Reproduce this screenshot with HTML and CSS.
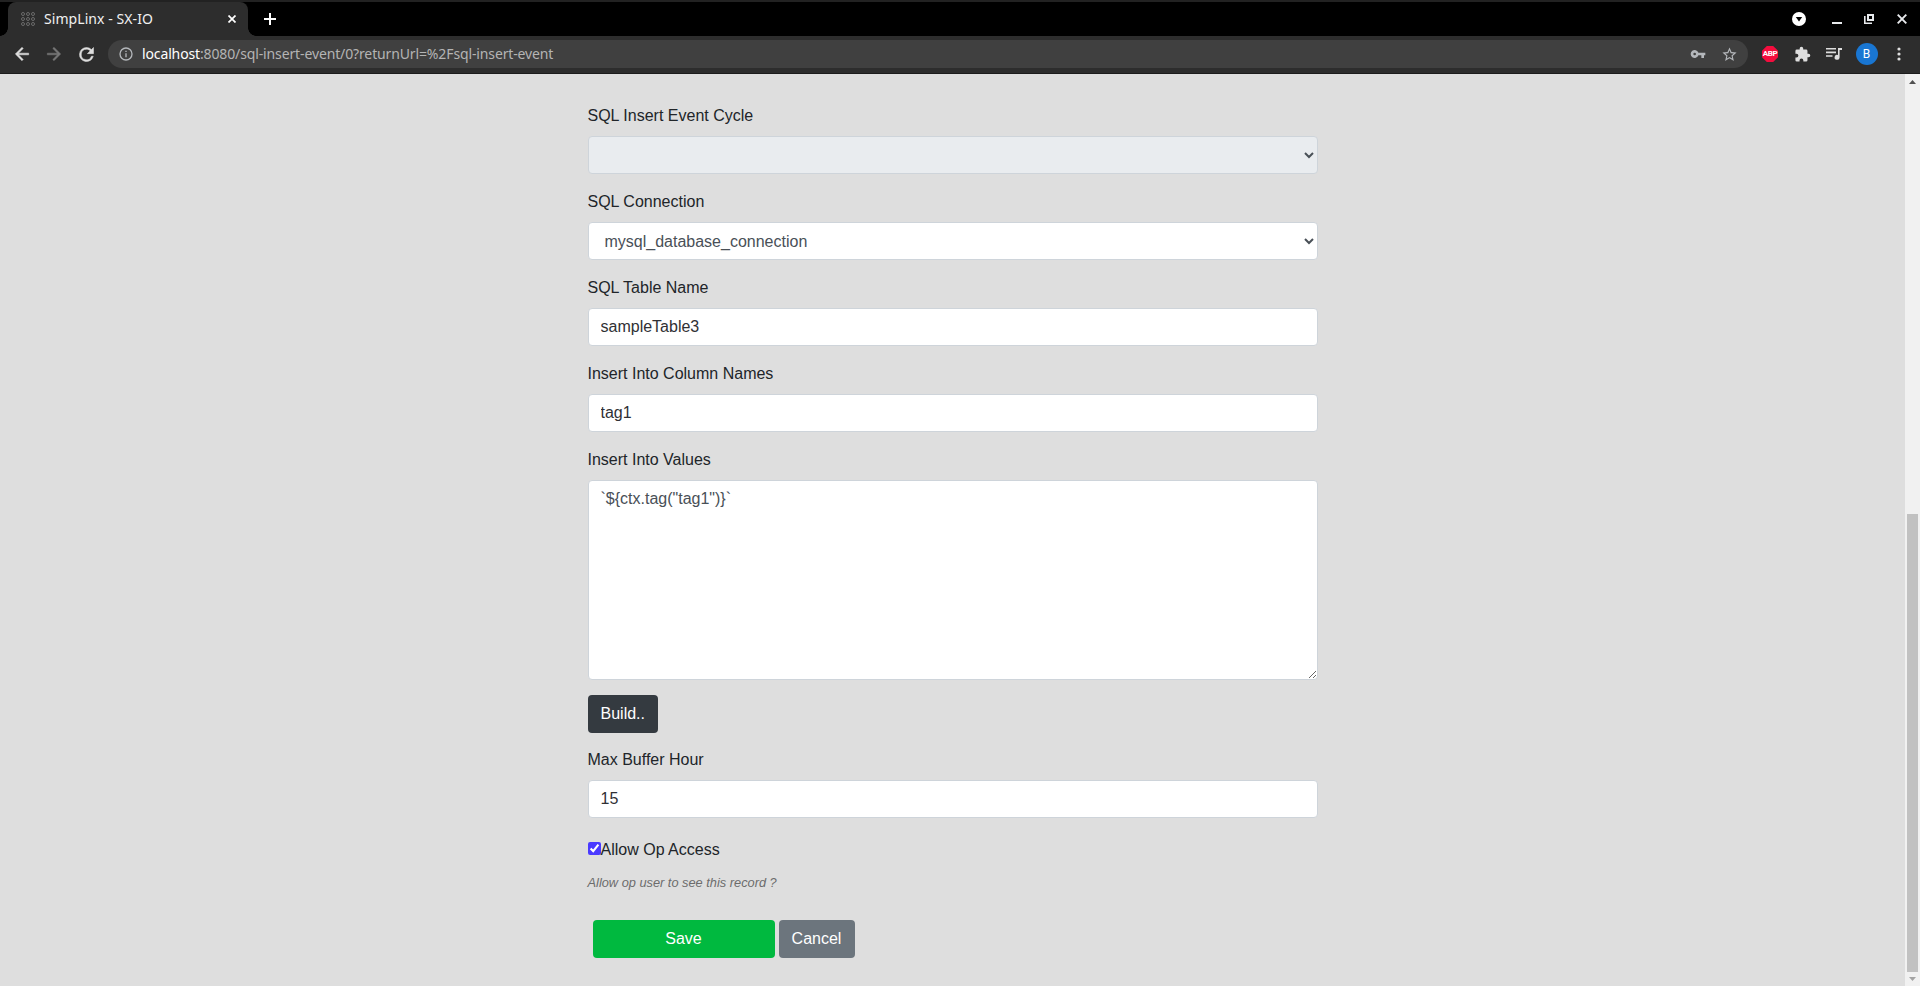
FILE: index.html
```html
<!DOCTYPE html>
<html lang="en">
<head>
    <meta charset="UTF-8">
    <meta name="viewport" content="width=device-width, initial-scale=1.0">
    <title>SimpLinx - SX-IO</title>
    <link rel="stylesheet" href="styles.css">
</head>
<body>
    <div class="tabstrip">
        <div class="tab">
            <svg class="favicon" width="14" height="14" viewBox="0 0 14 14" fill="none" stroke="#6b6b6b">
                <circle cx="2" cy="2" r="1.5"/><circle cx="7" cy="2" r="1.5"/><circle cx="12" cy="2" r="1.5"/>
                <circle cx="2" cy="7" r="1.5"/><circle cx="7" cy="7" r="1.5"/><circle cx="12" cy="7" r="1.5"/>
                <circle cx="2" cy="12" r="1.5"/><circle cx="7" cy="12" r="1.5"/><circle cx="12" cy="12" r="1.5"/>
            </svg>
            <span class="tab-title">SimpLinx - SX-IO</span>
            <svg class="tab-close" width="8" height="8" viewBox="0 0 8 8" stroke="#fff" stroke-width="1.7"><path d="M.5.5l7 7M7.5.5l-7 7"/></svg>
        </div>
        <svg class="new-tab" width="12" height="12" viewBox="0 0 12 12" stroke="#fff" stroke-width="2"><path d="M6 0v12M0 6h12"/></svg>
        <div class="window-buttons">
            <svg width="14" height="14" viewBox="0 0 14 14"><circle cx="7" cy="7" r="7" fill="#fff"/><path d="M3.8 5h6.4L7 9.6z" fill="#000"/></svg>
            <svg width="10" height="10" viewBox="0 0 10 10"><path d="M0 8h10v2H0z" fill="#e8eaed"/></svg>
            <svg width="10" height="10" viewBox="0 0 10 10" fill="none" stroke="#e8eaed"><path d="M4 1h5v5H4z" stroke-width="2"/><path d="M.8 2v7.2H8" stroke-width="1.6"/></svg>
            <svg width="10" height="10" viewBox="0 0 10 10" stroke="#e8eaed" stroke-width="1.9"><path d="M.7.7l8.6 8.6M9.3.7L.7 9.3"/></svg>
        </div>
    </div>

    <div class="toolbar">
        <svg class="nav-icon" width="20" height="20" viewBox="0 0 24 24" fill="#dedede" stroke="#dedede" stroke-width=".6"><path d="M20 11H7.83l5.59-5.59L12 4l-8 8 8 8 1.41-1.41L7.83 13H20z"/></svg>
        <svg class="nav-icon" width="20" height="20" viewBox="0 0 24 24" fill="#777" stroke="#777" stroke-width=".6"><path d="M12 4l-1.410 1.410L16.170 11H4v2h12.170l-5.580 5.590L12 20l8-8z"/></svg>
        <svg class="nav-icon" width="21" height="21" viewBox="0 0 24 24" fill="#dedede" stroke="#dedede" stroke-width=".6"><path d="M17.65 6.35A7.96 7.96 0 0 0 12 4a8 8 0 1 0 7.73 10h-2.08A6 6 0 1 1 12 6c1.66 0 3.14.69 4.22 1.78L13 11h7V4z"/></svg>
        <div class="address">
            <svg width="16" height="16" viewBox="0 0 24 24" fill="#b4b7bb"><path d="M11 7h2v2h-2zm0 4h2v6h-2zm1-9a10 10 0 1 0 0 20 10 10 0 0 0 0-20zm0 18a8 8 0 1 1 0-16 8 8 0 0 1 0 16z"/></svg>
            <span class="url"><b>localhost</b>:8080/sql-insert-event/0?returnUrl=%2Fsql-insert-event</span>
            <svg class="key" width="16" height="16" viewBox="0 0 24 24" fill="#b4b7bb"><path d="M12.65 10A6 6 0 1 0 12.65 14H17v4h4v-4h2v-4zM7 14a2 2 0 1 1 0-4 2 2 0 0 1 0 4z"/></svg>
            <svg width="17" height="17" viewBox="0 0 24 24" fill="#b4b7bb"><path d="M22 9.24l-7.19-.62L12 2 9.19 8.63 2 9.24l5.46 4.73L5.82 21 12 17.27 18.18 21l-1.63-7.03zM12 15.4l-3.76 2.27 1-4.28-3.32-2.88 4.38-.38L12 6.1l1.71 4.04 4.38.38-3.32 2.88 1 4.28z"/></svg>
        </div>
        <div class="extensions">
            <span class="abp">ABP</span>
            <svg width="17" height="17" viewBox="0 0 24 24" fill="#dedede"><path d="M20.5 11H19V7a2 2 0 0 0-2-2h-4V3.500a2.500 2.500 0 0 0-5 0V5H4a2 2 0 0 0-2 2v3.800h1.500a2.700 2.700 0 0 1 0 5.400H2V20a2 2 0 0 0 2 2h3.800v-1.500a2.700 2.700 0 0 1 5.400 0V22H17a2 2 0 0 0 2-2v-4h1.500a2.500 2.500 0 0 0 0-5z"/></svg>
            <svg width="16" height="14" viewBox="0 0 16 14" fill="#dedede"><path d="M0 1h10v1.600H0zM0 4.600h10v1.600H0zM0 8.200h6.500v1.600H0zM12 1h4v2h-2.400v7.300a2.500 2.500 0 1 1-1.600-2.300z"/></svg>
            <span class="avatar">B</span>
            <svg width="4" height="14" viewBox="0 0 4 14" fill="#dedede"><circle cx="2" cy="2" r="1.600"/><circle cx="2" cy="7" r="1.600"/><circle cx="2" cy="12" r="1.600"/></svg>
        </div>
    </div>

    <div class="viewport">
        <form class="event-form">
            <div class="form-group">
                <label for="cycle">SQL Insert Event Cycle</label>
                <select class="form-control" id="cycle" disabled></select>
            </div>
            <div class="form-group">
                <label for="connection">SQL Connection</label>
                <select class="form-control" id="connection">
                    <option>mysql_database_connection</option>
                </select>
            </div>
            <div class="form-group">
                <label for="table">SQL Table Name</label>
                <input class="form-control" type="text" id="table" value="sampleTable3">
            </div>
            <div class="form-group">
                <label for="columns">Insert Into Column Names</label>
                <input class="form-control" type="text" id="columns" value="tag1">
            </div>
            <div class="form-group values">
                <label for="values">Insert Into Values</label>
                <textarea class="form-control" id="values">`${ctx.tag("tag1")}`</textarea>
            </div>
            <button class="btn btn-dark" type="button">Build..</button>
            <div class="form-group">
                <label for="buffer">Max Buffer Hour</label>
                <input class="form-control" type="text" id="buffer" value="15">
            </div>
            <div class="check">
                <input type="checkbox" id="access" checked><label for="access">Allow Op Access</label>
            </div>
            <p class="hint">Allow op user to see this record ?</p>
            <div class="actions">
                <button class="btn btn-save" type="button">Save</button>
                <button class="btn btn-cancel" type="button">Cancel</button>
            </div>
        </form>
        <div class="scrollbar">
            <svg width="7" height="4" viewBox="0 0 7 4"><path d="M0 4L3.500 0 7 4z" fill="#505050"/></svg>
            <div class="thumb"></div>
            <svg width="7" height="4" viewBox="0 0 7 4"><path d="M0 0h7L3.500 4z" fill="#a3a3a3"/></svg>
        </div>
    </div>
</body>
</html>
```
FILE: styles.css
```css
* {
    box-sizing: border-box;
}
body {
    margin: 0;
    height: 986px;
    display: flex;
    flex-direction: column;
    overflow: hidden;
    background: #dedede;
    font-family: "Liberation Sans", Arial, sans-serif;
    font-size: 16px;
    line-height: 24px;
    color: #212529;
}
svg {
    display: block;
    flex: none;
}

/* browser window */
.tabstrip {
    height: 36px;
    flex: none;
    display: flex;
    align-items: center;
    background: #000;
    border-top: 2px solid #222;
    padding: 0 13px 0 8px;
}
.tab {
    position: relative;
    width: 240px;
    height: 34px;
    display: flex;
    align-items: center;
    padding: 0 12px 0 13px;
    background: #2d2d2d;
    border-radius: 8px 8px 0 0;
}
.tab::before, .tab::after {
    content: "";
    position: absolute;
    bottom: 0;
    width: 8px;
    height: 8px;
}
.tab::before {
    left: -8px;
    background: radial-gradient(circle at 0 0, transparent 7.5px, #2d2d2d 8px);
}
.tab::after {
    right: -8px;
    background: radial-gradient(circle at 100% 0, transparent 7.5px, #2d2d2d 8px);
}
.tab-title {
    margin-left: 9px;
    flex: 1;
    padding-bottom: 1px;
    font: 14px "Noto Sans", sans-serif;
    letter-spacing: 0.07px;
    white-space: nowrap;
    color: #f1f1f1;
}
.new-tab {
    margin-left: 16px;
}
.window-buttons {
    margin-left: auto;
    display: flex;
    align-items: center;
    gap: 22px;
}
.window-buttons svg:first-child {
    margin-right: 4px;
}
.window-buttons svg:last-child {
    margin-left: 1px;
}
.toolbar {
    height: 38px;
    flex: none;
    display: flex;
    align-items: center;
    padding: 0 12px 1px;
    background: #2d2d2d;
    border-bottom: 1px solid #1c1c1c;
}
.nav-icon {
    margin-right: 12px;
}
.nav-icon:nth-child(3) {
    margin-right: 11px;
}
.address {
    width: 1640px;
    height: 28px;
    flex: none;
    display: flex;
    align-items: center;
    padding: 0 10px;
    border-radius: 14px;
    background: #404040;
}
.url {
    flex: 1;
    margin-left: 8px;
    padding-bottom: 2px;
    font: 14px "Noto Sans", sans-serif;
    letter-spacing: -0.13px;
    color: #b4b4b4;
}
.url b {
    font-weight: normal;
    color: #fff;
}
.key {
    margin-right: 15px;
}
.extensions {
    display: flex;
    align-items: center;
    gap: 15.5px;
    margin-left: 14px;
}
.abp {
    width: 16px;
    height: 16px;
    background: #f40d3e;
    clip-path: polygon(30% 0, 70% 0, 100% 30%, 100% 70%, 70% 100%, 30% 100%, 0 70%, 0 30%);
    font: bold 8px/16px Roboto, sans-serif;
    letter-spacing: -0.3px;
    text-align: center;
    color: #fff;
}
.avatar {
    width: 22px;
    height: 22px;
    margin: 0 4px 0 -2px;
    border-radius: 50%;
    background: #1976d2;
    font: 12px/22px Roboto, sans-serif;
    text-align: center;
    color: #fff;
}

/* page */
.viewport {
    flex: 1;
    display: flex;
    min-height: 0;
}
.event-form {
    width: 730px;
    margin: 0 auto;
    padding-top: 30px;
}
.form-group {
    margin-bottom: 16px;
}
.form-group label {
    display: block;
    margin-bottom: 8px;
}
.form-control {
    display: block;
    width: 100%;
    height: 38px;
    padding: 6px 12px;
    border: 1px solid #ced4da;
    border-radius: 4px;
    background: #fff;
    font: 16px/24px "Liberation Sans", Arial, sans-serif;
    color: #495057;
}
input.form-control {
    color: #303034;
}
.form-control:disabled {
    background: #e9ecef;
    opacity: 1;
    color: #495057;
}
textarea.form-control {
    height: 200px;
    resize: vertical;
}
.values {
    margin-bottom: 15px;
}
.btn {
    height: 38px;
    display: block;
    padding: 6px 12px;
    border: 1px solid transparent;
    border-radius: 4px;
    font: 16px/24px "Liberation Sans", Arial, sans-serif;
    text-align: center;
    color: #fff;
}
.btn-dark {
    margin-bottom: 15px;
    background: #343a40;
}
.check {
    display: flex;
    align-items: center;
    height: 24px;
    margin-top: 19px;
}
.check label {
    padding-top: 2px;
}
.check input {
    width: 13px;
    height: 13px;
    margin: 0 0 1px;
    accent-color: #4a3aff;
}
.hint {
    margin: 12px 0 0;
    font-size: 12.8px;
    line-height: 19px;
    font-style: italic;
    color: #6c6c6c;
}
.actions {
    display: flex;
    gap: 4px;
    margin: 28px 0 0 5px;
}
.btn-save {
    width: 182px;
    background: #00b93f;
}
.btn-cancel {
    width: 76px;
    background: #6c757d;
}
.scrollbar {
    width: 15px;
    display: flex;
    flex-direction: column;
    align-items: center;
    justify-content: space-between;
    padding: 6px 0 5px;
    background: #f1f1f1;
}
.thumb {
    width: 11px;
    height: 458px;
    margin: auto 0 5px;
    background: #c1c1c1;
}
```
